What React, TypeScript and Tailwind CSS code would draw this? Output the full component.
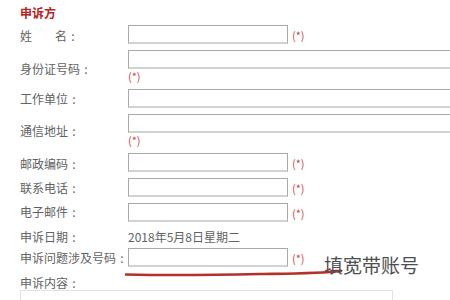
import React from "react";

const FONT = { fontFamily: '"Noto Sans CJK SC", "Noto Sans", sans-serif' };

function Star({ below }: { below?: boolean }) {
  return (
    <span
      className={`text-[11px] leading-[12px] text-[#cc4a4a] ${below ? "block mt-[1px]" : "ml-[4px]"}`}
    >
      (*)
    </span>
  );
}

function Box({ full }: { full?: boolean }) {
  return (
    <div
      className={`h-[19px] border border-[#a9a9a9] border-b-2 border-b-[#d2d2d2] bg-white ${full ? "w-[340px]" : "w-[160px]"}`}
    />
  );
}

// 冒号居中显示
function Label({ text }: { text: React.ReactNode }) {
  return (
    <>
      {text}
      <span className="inline-block w-[12px] text-center">:</span>
    </>
  );
}

type RowProps = {
  label: React.ReactNode;
  h: number;
  pt: number;
  children: React.ReactNode;
};

function Row({ label, h, pt, children }: RowProps) {
  return (
    <div className="flex items-start" style={{ height: h }}>
      <div className="w-[108px] shrink-0 leading-[16px] whitespace-nowrap" style={{ paddingTop: pt }}>
        {label}
      </div>
      <div className="flex-1">{children}</div>
    </div>
  );
}

export default function App() {
  return (
    <div
      className="relative w-[450px] h-[300px] overflow-hidden bg-white pl-[20px] text-[12px] text-[#626262]"
      style={FONT}
    >
      {/* 标题 */}
      <div className="h-[25px] pt-[5px] leading-[16px] font-bold text-[#b8231f]">申诉方</div>

      <Row label={<Label text={<><span className="mr-[23px]">姓</span>名</>} />} h={25} pt={3}>
        <div className="flex items-center">
          <Box />
          <Star />
        </div>
      </Row>

      <Row label={<Label text="身份证号码" />} h={39} pt={11}>
        <Box full />
        <Star below />
      </Row>

      <Row label={<Label text="工作单位" />} h={25} pt={2}>
        <Box full />
      </Row>

      <Row label={<Label text="通信地址" />} h={39} pt={9}>
        <Box full />
        <Star below />
      </Row>

      <Row label={<Label text="邮政编码" />} h={25} pt={3}>
        <div className="flex items-center">
          <Box />
          <Star />
        </div>
      </Row>

      <Row label={<Label text="联系电话" />} h={25} pt={2}>
        <div className="flex items-center">
          <Box />
          <Star />
        </div>
      </Row>

      <Row label={<Label text="电子邮件" />} h={25} pt={1}>
        <div className="flex items-center">
          <Box />
          <Star />
        </div>
      </Row>

      <Row label={<Label text="申诉日期" />} h={20} pt={1}>
        <div className="leading-[16px] pt-[1px]">2018年5月8日星期二</div>
      </Row>

      <Row label={<Label text="申诉问题涉及号码" />} h={25} pt={2}>
        <div className="flex items-center">
          <Box />
          <Star />
        </div>
      </Row>

      <div className="h-[17px] pt-[2px] leading-[16px]">
        <Label text="申诉内容" />
      </div>

      <div className="w-[373px] h-[60px] border border-[#e2e2e2] bg-white" />

      {/* 手写标注 */}
      <svg
        className="absolute left-0 top-0 pointer-events-none"
        width="450"
        height="300"
        viewBox="0 0 450 300"
      >
        <path
          d="M126 274.5 C170 275.5 215 275 260 274 C295 273.5 320 273.5 341 271"
          stroke="#b3302b"
          strokeWidth="2.6"
          fill="none"
          strokeLinecap="round"
        />
      </svg>
      <div className="absolute left-[324px] top-[253px] text-[19px] leading-[24px] text-[#4e4e4e]">
        填宽带账号
      </div>
    </div>
  );
}
